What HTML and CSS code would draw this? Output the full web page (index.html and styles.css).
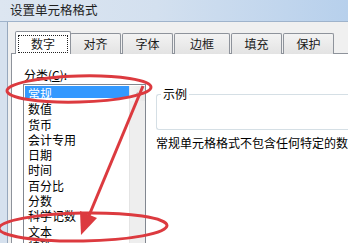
FILE: index.html
```html
<!DOCTYPE html>
<html lang="zh-CN">
<head>
  <meta charset="UTF-8" />
  <title>设置单元格格式</title>
  <link rel="stylesheet" href="styles.css">
</head>
<body>
  <div class="window">
    <div class="titlebar">设置单元格格式</div>
    <div class="frame">
      <div class="frame-edge"></div>
      <div class="dialog">
        <div class="tabs">
          <div class="tab active"><span class="focus">数字</span></div>
          <div class="tab">对齐</div>
          <div class="tab">字体</div>
          <div class="tab wide">边框</div>
          <div class="tab">填充</div>
          <div class="tab">保护</div>
        </div>
        <div class="panel">
          <div class="left">
            <div class="label">分类(<u>C</u>):</div>
            <div class="listbox">
              <ul class="items">
                <li class="selected">常规</li>
                <li>数值</li>
                <li>货币</li>
                <li>会计专用</li>
                <li>日期</li>
                <li>时间</li>
                <li>百分比</li>
                <li>分数</li>
                <li>科学记数</li>
                <li>文本</li>
                <li>特殊</li>
              </ul>
              <div class="scrollbar">
                <div class="scroll-btn">
                  <svg width="7" height="4" viewBox="0 0 7 4"><path d="M0 4 L3.5 0 L7 4 Z" fill="#b5b5b5"/></svg>
                </div>
              </div>
            </div>
          </div>
          <div class="right">
            <div class="sample">
              <span class="sample-title">示例</span>
            </div>
            <p class="desc">常规单元格格式不包含任何特定的数字格式。</p>
          </div>
        </div>
      </div>
    </div>
  </div>

  <svg class="marks" width="348" height="243" viewBox="0 0 348 243">
    <ellipse cx="79" cy="89" rx="72" ry="13" transform="rotate(-1.5 79 89)" fill="none" stroke="#dc3a3f" stroke-width="3"/>
    <ellipse cx="83" cy="227" rx="84" ry="14" transform="rotate(-1 83 227)" fill="none" stroke="#dc3a3f" stroke-width="3"/>
    <line x1="143" y1="86" x2="88" y2="218" stroke="#dc3a3f" stroke-width="3"/>
    <polygon points="81,235 80,211 97,218" fill="#dc3a3f"/>
  </svg>
</body>
</html>
```

FILE: styles.css
```css
body {
  margin: 0;
  width: 348px;
  height: 243px;
  overflow: hidden;
  position: relative;
  font-family: "Noto Sans CJK SC", "Liberation Sans", sans-serif;
  font-size: 12px;
  color: #000;
  background: #f0f0f0;
}
.window {
  display: flex;
  flex-direction: column;
  width: 348px;
  height: 243px;
  overflow: hidden;
}
.titlebar {
  flex-shrink: 0;
  height: 22px;
  line-height: 20px;
  padding-left: 10px;
  font-size: 12.5px;
  color: #1e1e1e;
  background: linear-gradient(to right, #dde6f1 0%, #d3e0ef 45%, #b7d0ec 100%);
  border-bottom: 1px solid #9fb3cb;
  box-sizing: border-box;
}
.frame {
  flex: 1;
  display: flex;
  min-height: 0;
}
.frame-edge {
  flex-shrink: 0;
  width: 7px;
  background: #d6e1ee;
  border-right: 1px solid #97a8bd;
}
.dialog {
  flex: 1;
  min-width: 0;
  display: flex;
  flex-direction: column;
  padding: 9px 0 0 3px;
  background: #f0f0f0;
  overflow: hidden;
}
.tabs {
  flex-shrink: 0;
  display: flex;
  align-items: flex-end;
  padding-left: 4px;
  height: 23px;
  position: relative;
  z-index: 1;
}
.tab {
  flex-shrink: 0;
  width: 51px;
  height: 21px;
  line-height: 20px;
  text-align: center;
  margin-left: 1px;
  border: 1px solid #8e939b;
  border-bottom: none;
  box-sizing: border-box;
  border-radius: 2px 2px 0 0;
  background: linear-gradient(#f3f3f3, #e3e3e3);
  color: #1a1a1a;
}
.tab.wide {
  width: 56px;
}
.tab.active {
  width: 56px;
  height: 23px;
  margin-left: 0;
  margin-right: -1px;
  background: #fff;
  padding-top: 2px;
  position: relative;
  z-index: 2;
}
.tab.active + .tab {
  margin-left: 0;
}
.focus {
  display: inline-block;
  padding: 0 12px;
  line-height: 16px;
  border: 1px dotted #222;
}
.panel {
  flex: 1;
  display: flex;
  background: #fff;
  border: 1px solid #8e939b;
  border-right: none;
  border-bottom: none;
  margin-top: -1px;
  padding: 12px 0 0 11px;
}
.left {
  flex-shrink: 0;
  width: 123px;
  display: flex;
  flex-direction: column;
}
.label {
  height: 16px;
  padding-top: 2px;
  line-height: 14px;
  padding-left: 1px;
}
.label u {
  text-decoration: underline;
}
.listbox {
  flex: 1;
  display: flex;
  border: 1px solid #828790;
  border-bottom: none;
  padding: 1px 0 0 1px;
}
.items {
  flex: 1;
  list-style: none;
  margin: 0;
  padding: 0;
}
.items li {
  height: 15.3px;
  line-height: 15.3px;
  padding-left: 3px;
}
.items li.selected {
  color: #fff;
  background: linear-gradient(#3399ff, #3399ff) top left / 100% 12px no-repeat;
}
.scrollbar {
  width: 15px;
  background: #eeeeee;
  border-left: 1px solid #e4e4e4;
}
.scroll-btn {
  height: 15px;
  display: flex;
  align-items: center;
  justify-content: center;
  background: linear-gradient(to right, #f5f5f5, #e6e6e6);
}
.right {
  flex: 1;
  min-width: 0;
  padding: 28px 0 0 10px;
}
.sample {
  position: relative;
  height: 34px;
  border: 1px solid #d5dfe5;
  border-right: none;
  border-radius: 3px 0 0 3px;
}
.sample-title {
  position: absolute;
  top: -9px;
  left: 4px;
  padding: 0 2px;
  background: #fff;
  line-height: 16px;
}
.desc {
  margin: 6px 0 0 0;
  white-space: nowrap;
  overflow: hidden;
  line-height: 14px;
}
.marks {
  position: absolute;
  left: 0;
  top: 0;
}
```
